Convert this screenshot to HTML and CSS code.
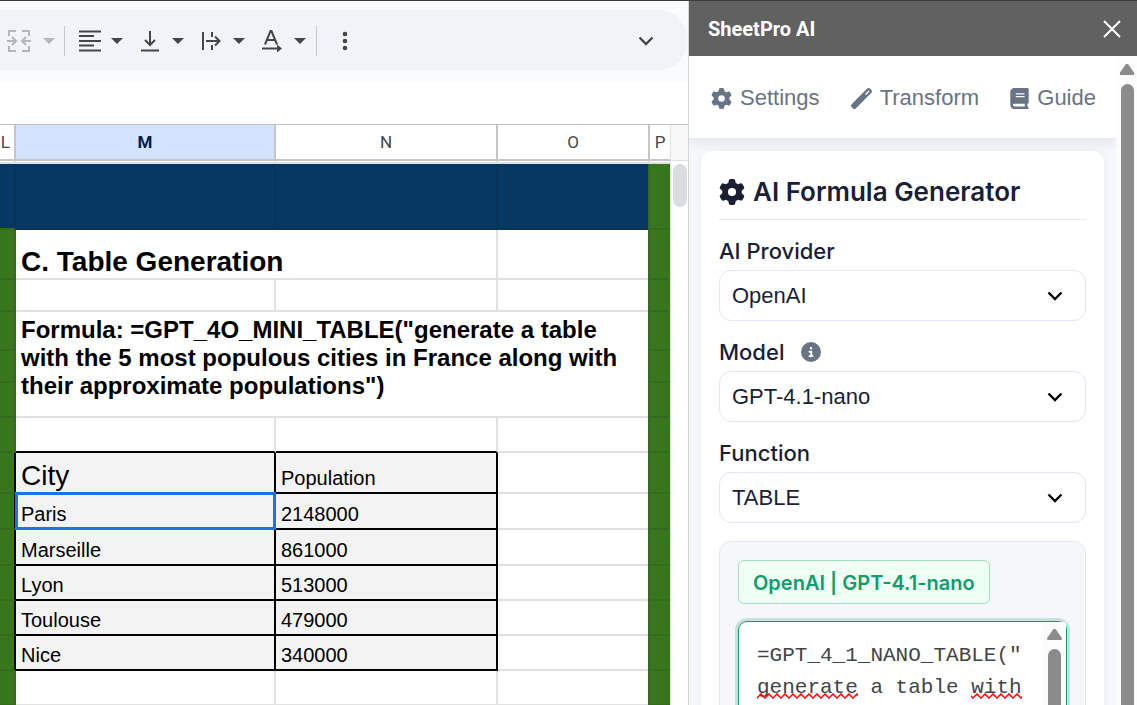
FILE: index.html
```html
<!DOCTYPE html>
<html lang="en">
<head>
    <meta charset="UTF-8">
    <meta name="viewport" content="width=device-width, initial-scale=1.0">
    <title>SheetPro AI</title>
    <link rel="stylesheet" href="styles.css">
</head>
<body>
    <main class="sheet">
        <div class="toolbar-wrap">
            <div class="toolbar">
                <button class="tool disabled" aria-label="Merge cells" disabled>
                    <svg class="tool-icon" viewBox="0 0 24 24" fill="none" stroke="currentColor" stroke-width="2">
                        <path d="M9 2H2v5M2 17v5h7M15 2h7v5M22 17v5h-7M0 12h9M5 8l4 4-4 4M24 12h-9M19 8l-4 4 4 4"/>
                    </svg>
                    <span class="caret"></span>
                </button>
                <span class="divider"></span>
                <button class="tool" aria-label="Horizontal align">
                    <svg class="tool-icon" viewBox="0 0 24 24" fill="none" stroke="currentColor" stroke-width="2">
                        <path d="M1 2.500h22M1 7h15M1 12h22M1 16.500h15M1 21.500h22"/>
                    </svg>
                    <span class="caret"></span>
                </button>
                <button class="tool" aria-label="Vertical align">
                    <svg class="tool-icon" viewBox="0 0 24 24" fill="none" stroke="currentColor" stroke-width="2">
                        <path d="M2 21.500h18M11 2v14M6 11l5 5 5-5"/>
                    </svg>
                    <span class="caret"></span>
                </button>
                <button class="tool" aria-label="Text wrapping">
                    <svg class="tool-icon" viewBox="0 0 24 24" fill="none" stroke="currentColor" stroke-width="2">
                        <path d="M3 3v18M12 3v5M12 16v5M6 12h13M15 7.500l4.500 4.500-4.500 4.500"/>
                    </svg>
                    <span class="caret"></span>
                </button>
                <button class="tool" aria-label="Text rotation">
                    <svg class="tool-icon" viewBox="0 0 24 24" fill="none" stroke="currentColor" stroke-width="2">
                        <path d="M4 15.500L9.500 2h1L16 15.500M6 11h8M1 19.500h17"/>
                        <path d="M16 15.500l5 4-5 4z" fill="currentColor" stroke="none"/>
                    </svg>
                    <span class="caret"></span>
                </button>
                <span class="divider"></span>
                <button class="more" aria-label="More">
                    <svg width="6" height="20" viewBox="0 0 6 20" fill="currentColor">
                        <circle cx="3" cy="3" r="2.300"/><circle cx="3" cy="10" r="2.300"/><circle cx="3" cy="17" r="2.300"/>
                    </svg>
                </button>
                <button class="collapse" aria-label="Hide the menus">
                    <svg width="16" height="10" viewBox="0 0 16 10" fill="none" stroke="currentColor" stroke-width="2.400">
                        <path d="M1.500 1.500L8 8l6.500-6.500"/>
                    </svg>
                </button>
            </div>
        </div>

        <div class="grid-wrap">
            <div class="grid-main">
                <table class="grid">
                    <colgroup>
                        <col class="col-l"><col class="col-m"><col class="col-n"><col class="col-o"><col class="col-p">
                    </colgroup>
                    <thead>
                        <tr>
                            <th>L</th>
                            <th class="active">M</th>
                            <th>N</th>
                            <th>O</th>
                            <th>P</th>
                        </tr>
                        <tr class="freeze"><td></td><td></td><td></td><td></td><td></td></tr>
                    </thead>
                    <tbody>
                        <tr class="h66"><td class="navy above-green"></td><td class="navy"></td><td class="navy"></td><td class="navy"></td><td class="green"></td></tr>
                        <tr class="h50"><td class="green"></td><td class="title" colspan="2">C. Table Generation</td><td></td><td class="green"></td></tr>
                        <tr class="h32"><td class="green"></td><td></td><td></td><td></td><td class="green"></td></tr>
                        <tr class="h39"><td class="green"></td><td class="formula" colspan="3" rowspan="3">Formula: =GPT_4O_MINI_TABLE("generate a table with the 5 most populous cities in France along with their approximate populations")</td><td class="green"></td></tr>
                        <tr class="h32"><td class="green"></td><td class="green"></td></tr>
                        <tr class="h35"><td class="green"></td><td class="green"></td></tr>
                        <tr class="h35"><td class="green"></td><td class="above-data"></td><td class="above-data"></td><td></td><td class="green"></td></tr>
                        <tr class="h41"><td class="green before-data"></td><td class="data big">City</td><td class="data">Population</td><td></td><td class="green"></td></tr>
                        <tr class="h36"><td class="green before-data"></td><td class="data selected">Paris</td><td class="data">2148000</td><td></td><td class="green"></td></tr>
                        <tr class="h36"><td class="green before-data"></td><td class="data">Marseille</td><td class="data">861000</td><td></td><td class="green"></td></tr>
                        <tr class="h35"><td class="green before-data"></td><td class="data">Lyon</td><td class="data">513000</td><td></td><td class="green"></td></tr>
                        <tr class="h35"><td class="green before-data"></td><td class="data">Toulouse</td><td class="data">479000</td><td></td><td class="green"></td></tr>
                        <tr class="h35"><td class="green before-data"></td><td class="data">Nice</td><td class="data">340000</td><td></td><td class="green"></td></tr>
                        <tr class="h35"><td class="green"></td><td></td><td></td><td></td><td class="green"></td></tr>
                    </tbody>
                </table>
            </div>
            <div class="grid-scroll"><div class="grid-thumb"></div></div>
        </div>
    </main>

    <aside class="sidebar">
        <header class="sidebar-header">
            <span>SheetPro AI</span>
            <button class="close" aria-label="Close">
                <svg width="18" height="18" viewBox="0 0 18 18" fill="none" stroke="currentColor" stroke-width="2">
                    <path d="M1 1l16 16M17 1L1 17"/>
                </svg>
            </button>
        </header>
        <div class="sidebar-body">
            <div class="panel">
                <nav class="tabs">
                    <a href="#settings">
                        <svg width="21" height="21" viewBox="0 0 512 512" fill="currentColor"><path d="M495.900 166.600c3.200 8.700 .5 18.400-6.400 24.600l-43.300 39.400c1.100 8.300 1.700 16.800 1.700 25.400s-.6 17.100-1.700 25.400l43.300 39.400c6.900 6.200 9.600 15.900 6.400 24.600c-4.400 11.900-9.700 23.300-15.800 34.300l-4.700 8.100c-6.600 11-14 21.400-22.100 31.200c-5.900 7.200-15.700 9.600-24.500 6.800l-55.700-17.700c-13.400 10.300-28.200 18.900-44 25.400l-12.500 57.100c-2 9.100-9 16.300-18.200 17.800c-13.800 2.300-28 3.500-42.500 3.500s-28.700-1.200-42.500-3.500c-9.200-1.500-16.200-8.700-18.200-17.800l-12.500-57.100c-15.800-6.500-30.600-15.100-44-25.400L83.100 425.900c-8.800 2.800-18.600 .3-24.500-6.800c-8.100-9.800-15.500-20.200-22.100-31.200l-4.700-8.100c-6.100-11-11.400-22.400-15.800-34.300c-3.200-8.700-.5-18.400 6.400-24.600l43.300-39.400C64.600 273.100 64 264.600 64 256s.6-17.100 1.700-25.400L22.400 191.200c-6.900-6.200-9.600-15.900-6.400-24.600c4.400-11.900 9.700-23.300 15.800-34.300l4.700-8.100c6.600-11 14-21.400 22.100-31.200c5.900-7.200 15.700-9.600 24.500-6.800l55.700 17.700c13.400-10.300 28.200-18.900 44-25.400l12.500-57.100c2-9.100 9-16.300 18.200-17.800C227.300 1.200 241.500 0 256 0s28.700 1.200 42.500 3.500c9.200 1.500 16.200 8.700 18.200 17.800l12.500 57.100c15.800 6.500 30.600 15.100 44 25.400l55.700-17.700c8.800-2.800 18.600-.3 24.500 6.800c8.100 9.800 15.500 20.200 22.100 31.200l4.700 8.100c6.100 11 11.400 22.400 15.800 34.300zM256 336a80 80 0 1 0 0-160 80 80 0 1 0 0 160z"/></svg>
                        Settings
                    </a>
                    <a href="#transform">
                        <svg width="21" height="21" viewBox="0 0 512 512" fill="currentColor"><path d="M14.100 463.300c-18.700-18.700-18.700-49.100 0-67.900L395.400 14.100c18.700-18.700 49.100-18.700 67.900 0l34.600 34.600c18.700 18.700 18.700 49.100 0 67.900L116.500 497.900c-18.700 18.700-49.100 18.700-67.900 0L14.100 463.300zM368 168l85-85L429.400 59.300l-85 85z"/></svg>
                        Transform
                    </a>
                    <a href="#guide">
                        <svg width="19" height="21" viewBox="0 0 448 512" fill="currentColor"><path d="M96 0C43 0 0 43 0 96V416c0 53 43 96 96 96H384h32c17.700 0 32-14.300 32-32s-14.300-32-32-32V384c17.700 0 32-14.300 32-32V32c0-17.700-14.300-32-32-32H384 96zm0 384H352v64H96c-17.700 0-32-14.300-32-32s14.300-32 32-32zm32-240c0-8.800 7.200-16 16-16H336c8.800 0 16 7.200 16 16s-7.200 16-16 16H144c-8.800 0-16-7.200-16-16zm16 48H336c8.800 0 16 7.200 16 16s-7.200 16-16 16H144c-8.800 0-16-7.200-16-16s7.200-16 16-16z"/></svg>
                        Guide
                    </a>
                </nav>
                <section class="card">
                    <h1>
                        <svg width="26" height="26" viewBox="0 0 512 512" fill="currentColor"><path d="M495.900 166.600c3.200 8.700 .5 18.400-6.400 24.600l-43.300 39.400c1.100 8.300 1.700 16.800 1.700 25.400s-.6 17.100-1.700 25.400l43.300 39.400c6.900 6.200 9.600 15.900 6.400 24.600c-4.400 11.900-9.700 23.300-15.800 34.300l-4.700 8.100c-6.600 11-14 21.400-22.100 31.200c-5.900 7.200-15.700 9.600-24.500 6.800l-55.700-17.700c-13.400 10.300-28.200 18.900-44 25.400l-12.500 57.100c-2 9.100-9 16.300-18.200 17.800c-13.800 2.300-28 3.500-42.500 3.500s-28.700-1.200-42.500-3.500c-9.200-1.500-16.200-8.700-18.200-17.800l-12.500-57.100c-15.800-6.500-30.600-15.100-44-25.400L83.100 425.900c-8.800 2.800-18.600 .3-24.500-6.800c-8.100-9.800-15.500-20.200-22.100-31.200l-4.700-8.100c-6.100-11-11.400-22.400-15.800-34.300c-3.200-8.700-.5-18.400 6.400-24.600l43.300-39.400C64.600 273.100 64 264.600 64 256s.6-17.100 1.700-25.400L22.400 191.200c-6.900-6.200-9.600-15.900-6.400-24.600c4.400-11.900 9.700-23.300 15.800-34.300l4.700-8.100c6.600-11 14-21.400 22.100-31.200c5.900-7.200 15.700-9.600 24.500-6.800l55.700 17.700c13.400-10.300 28.200-18.900 44-25.400l12.500-57.100c2-9.100 9-16.300 18.200-17.800C227.300 1.200 241.500 0 256 0s28.700 1.200 42.500 3.500c9.200 1.500 16.200 8.700 18.200 17.800l12.500 57.100c15.800 6.500 30.600 15.100 44 25.400l55.700-17.700c8.800-2.800 18.600-.3 24.500 6.800c8.100 9.800 15.500 20.200 22.100 31.200l4.700 8.100c6.100 11 11.400 22.400 15.800 34.300zM256 336a80 80 0 1 0 0-160 80 80 0 1 0 0 160z"/></svg>
                        AI Formula Generator
                    </h1>

                    <div class="field">
                        <label for="provider">AI Provider</label>
                        <div class="select-wrap">
                            <select id="provider"><option>OpenAI</option></select>
                            <svg class="chevron" width="16" height="10" viewBox="0 0 16 10"><path d="M1.500 1.500L8 8l6.500-6.500"/></svg>
                        </div>
                    </div>

                    <div class="field">
                        <div class="label-row">
                            <label for="model">Model</label>
                            <svg width="20" height="20" viewBox="0 0 512 512" fill="currentColor"><path d="M256 512A256 256 0 1 0 256 0a256 256 0 1 0 0 512zM216 336h24V272H216c-13.300 0-24-10.700-24-24s10.700-24 24-24h48c13.300 0 24 10.700 24 24v88h8c13.300 0 24 10.700 24 24s-10.700 24-24 24H216c-13.300 0-24-10.700-24-24s10.700-24 24-24zm40-208a32 32 0 1 1 0 64 32 32 0 1 1 0-64z"/></svg>
                        </div>
                        <div class="select-wrap">
                            <select id="model"><option>GPT-4.1-nano</option></select>
                            <svg class="chevron" width="16" height="10" viewBox="0 0 16 10"><path d="M1.500 1.500L8 8l6.500-6.500"/></svg>
                        </div>
                    </div>

                    <div class="field">
                        <label for="function">Function</label>
                        <div class="select-wrap">
                            <select id="function"><option>TABLE</option></select>
                            <svg class="chevron" width="16" height="10" viewBox="0 0 16 10"><path d="M1.500 1.500L8 8l6.500-6.500"/></svg>
                        </div>
                    </div>

                    <div class="output">
                        <span class="badge">OpenAI | GPT-4.1-nano</span>
                        <div class="editor">
                            <textarea aria-label="Formula" spellcheck="false">=GPT_4_1_NANO_TABLE("generate a table with</textarea>
                            <!-- spelling marks under the second line -->
                            <svg class="squiggles" width="265" height="7" viewBox="0 0 265 7">
                                <defs>
                                    <pattern id="wave" width="8" height="7" patternUnits="userSpaceOnUse">
                                        <path d="M-2 3L0 5l4-4 4 4 2-2" fill="none" stroke="#f00" stroke-width="1.500"/>
                                    </pattern>
                                </defs>
                                <rect width="101" height="7" fill="url(#wave)"/>
                                <rect x="214" width="51" height="7" fill="url(#wave)"/>
                            </svg>
                            <div class="scrollbar">
                                <span class="scroll-up"></span>
                                <span class="scroll-thumb"></span>
                            </div>
                        </div>
                    </div>
                </section>
            </div>
            <div class="scrollbar">
                <span class="scroll-up"></span>
                <span class="scroll-thumb"></span>
            </div>
        </div>
    </aside>
</body>
</html>
```

FILE: styles.css
```css
:root {
    --text: #1a1f36;
    --muted: #697386;
    --panel-bg: #f5f7fb;
    --green: #38761d;
    --green-line: #336a1c;
    --navy: #073763;
    --navy-line: #0b325a;
    --accent: #0f9d6e;
    --font-body: "Liberation Sans", Arial, sans-serif;
    --font-heading: Inter, sans-serif;
}

* {
    box-sizing: border-box;
}

body {
    margin: 0;
    height: 100vh;
    overflow: hidden;
    display: flex;
    border-top: 1px solid #3c3c40;
    font-family: var(--font-body);
    background: #fff;
}

button {
    border: none;
    background: none;
    padding: 0;
    color: inherit;
}

/* Toolbar */
.sheet {
    flex: 1;
    min-width: 0;
    overflow: hidden;
}

.toolbar-wrap {
    padding: 9px 0 12px;
    background: #f9fbfd;
    margin-bottom: 42px;
}

.toolbar {
    display: flex;
    align-items: center;
    height: 60px;
    padding: 2px 34px 0 7px;
    border-radius: 0 30px 30px 0;
    background: #f0f4f9;
    color: #444746;
}

.tool {
    display: flex;
    align-items: center;
    gap: 9px;
    height: 40px;
    margin-right: 16px;
}

.tool.disabled {
    color: #b4b7ba;
    gap: 12px;
    margin-right: 9px;
}

.tool-icon {
    width: 24px;
    height: 24px;
}

.caret {
    border: 6px solid transparent;
    border-top-color: currentColor;
    border-bottom: none;
}

.divider {
    width: 1px;
    height: 30px;
    margin-right: 13px;
    background: #c7c7c7;
}

.tool + .divider {
    margin-left: -6px;
}

.disabled + .divider {
    margin-left: 0;
}

.more {
    margin-left: 12px;
    height: 20px;
}

.collapse {
    margin-left: auto;
    height: 10px;
}

.more svg,
.collapse svg,
.close svg {
    display: block;
}

/* Spreadsheet */
.grid-wrap {
    display: flex;
}

.grid-main {
    flex: 1;
    min-width: 0;
}

.grid {
    width: 100%;
    table-layout: fixed;
    border-collapse: separate;
    border-spacing: 0;
    border-top: 1px solid #c0c0c0;
    font-size: 20px;
    line-height: 24px;
    color: #000;
}

.col-l { width: 16px; }
.col-m { width: 260px; }
.col-n { width: 222px; }
.col-p { width: 22px; }

.grid th {
    height: 36px;
    padding: 0;
    border-right: 2px solid #c7c7c7;
    border-bottom: 2px solid #c7c7c7;
    font-family: Roboto, sans-serif;
    font-size: 17px;
    font-weight: 400;
    color: #444746;
}

/* column L is scrolled half out of view */
.grid th:first-child {
    direction: rtl;
    text-align: right;
    padding-right: 6px;
}

.grid th.active {
    background: #d3e3fd;
    color: #041e49;
    font-weight: 700;
}

.grid td {
    padding: 0 4px 2px;
    border-right: 2px solid #e1e1e1;
    border-bottom: 2px solid #e1e1e1;
    vertical-align: bottom;
}

/* column P draws the line between itself and O */
.grid th:nth-child(4),
.grid td:nth-last-child(2):not(:first-child),
.grid th:last-child,
.grid td:last-child {
    border-right: none;
}

.grid th:last-child {
    border-left: 2px solid #c7c7c7;
}

.grid td:last-child {
    border-left: 2px solid #e1e1e1;
}

.grid .freeze td {
    height: 3px;
    padding: 0;
}

.h32 { height: 32px; }
.h35 { height: 35px; }
.h36 { height: 36px; }
.h39 { height: 39px; }
.h41 { height: 41px; }
.h50 { height: 50px; }
.h66 { height: 66px; }

.grid .navy {
    background: var(--navy);
    border-color: var(--navy-line);
}

.grid .green,
.grid .green:last-child {
    background: var(--green);
    border-color: var(--green-line);
}

.grid .above-green {
    border-bottom-color: var(--green-line);
}

.grid .title {
    padding-left: 5px;
    padding-bottom: 0;
    font-size: 28px;
    line-height: 32px;
    font-weight: 700;
}

.grid .formula {
    padding-top: 4px;
    padding-left: 5px;
    font-size: 24px;
    line-height: 28px;
    font-weight: 700;
    vertical-align: top;
}

.grid .data {
    padding-left: 5px;
    background: #f3f3f3;
    border-color: #000;
}

.grid .big {
    padding-bottom: 0;
    font-size: 28px;
    line-height: 32px;
}

.grid .above-data {
    border-bottom-color: #000;
}

.grid .before-data {
    border-right-color: #000;
}

.selected {
    position: relative;
}

.selected::after {
    content: "";
    position: absolute;
    top: -2px;
    right: -2px;
    bottom: -2px;
    left: -1px;
    border: 3px solid #1a73e8;
}

.grid-scroll {
    width: 18px;
    padding: 39px 1px 0 2px;
    border-left: 1px solid #e1e1e1;
    border-top: 1px solid #c0c0c0;
    background: linear-gradient(#f8f8f8 35px, #d9e2ec 35px, #d9e2ec 36px, #fff 36px);
}

.grid-thumb {
    height: 43px;
    border-radius: 7px;
    background: #dadce0;
}

/* Sidebar */
.sidebar {
    width: 449px;
    display: flex;
    flex-direction: column;
    border-left: 1px solid #d5d5d5;
}

.sidebar-header {
    display: flex;
    align-items: center;
    justify-content: space-between;
    height: 55px;
    flex-shrink: 0;
    padding: 1px 16px 0 19px;
    background: #616161;
    color: #fff;
    font-family: Roboto, sans-serif;
    font-size: 20px;
    font-weight: 700;
}

.sidebar-body {
    flex: 1;
    min-height: 0;
    display: flex;
}

.panel {
    flex: 1;
    min-width: 0;
    overflow: hidden;
    background: var(--panel-bg);
}

.tabs {
    display: flex;
    align-items: center;
    justify-content: space-between;
    height: 83px;
    padding: 2px 20px 0 22px;
    border-bottom: 1px solid #e6e8f2;
    background: #fff;
    box-shadow: 0 4px 12px rgba(26, 31, 54, 0.08);
}

.tabs a {
    display: flex;
    align-items: center;
    gap: 8px;
    color: var(--muted);
    font-size: 22px;
    text-decoration: none;
}

.card {
    margin: 12px;
    padding: 18px;
    border-radius: 12px;
    background: #fff;
    color: var(--text);
    box-shadow: 0 2px 8px rgba(26, 31, 54, 0.06);
}

h1 {
    display: flex;
    align-items: center;
    gap: 8px;
    height: 51px;
    margin: 0 0 18px;
    padding-bottom: 5px;
    border-bottom: 1px solid #e6e8f2;
    font-family: var(--font-heading);
    font-size: 26px;
    font-weight: 600;
}

.field {
    margin-bottom: 18px;
}

.field label {
    display: block;
    margin-bottom: 5px;
    font-family: var(--font-heading);
    font-size: 22px;
    line-height: 27px;
    font-weight: 500;
}

.label-row {
    display: flex;
    gap: 17px;
}

.label-row svg {
    margin-top: 3px;
    color: var(--muted);
}

.select-wrap {
    position: relative;
}

.select-wrap select {
    display: block;
    width: 100%;
    height: 51px;
    padding: 0 12px;
    border: 1px solid #e3e6f2;
    border-radius: 12px;
    background: #fff;
    color: var(--text);
    font-family: var(--font-body);
    font-size: 22px;
    appearance: none;
}

.chevron {
    position: absolute;
    top: 21px;
    right: 23px;
    fill: none;
    stroke: #000;
    stroke-width: 2.4;
    pointer-events: none;
}

.output {
    padding: 18px;
    border: 1px solid #e3e6f2;
    border-radius: 12px;
    background: var(--panel-bg);
}

.badge {
    display: block;
    width: fit-content;
    margin-bottom: 17px;
    padding: 9px 14px 7px;
    border: 1px solid #a3dcc4;
    border-radius: 6px;
    background: #f0fff4;
    color: var(--accent);
    font-family: var(--font-heading);
    font-size: 20px;
    line-height: 26px;
    font-weight: 600;
}

.editor {
    position: relative;
}

.editor textarea {
    display: block;
    width: 100%;
    height: 180px;
    padding: 18px 40px 18px 18px;
    border: 1px solid var(--accent);
    border-radius: 9px;
    outline: none;
    overflow: hidden;
    resize: none;
    background: #fff;
    box-shadow: 0 0 0 3px #c3e4dc;
    color: #444;
    font-family: "Liberation Mono", "Courier New", monospace;
    font-size: 21px;
    line-height: 32px;
}

.squiggles {
    position: absolute;
    top: 72px;
    left: 19px;
    pointer-events: none;
}

/* Scrollbars */
.scrollbar {
    display: flex;
    flex-direction: column;
    align-items: center;
    width: 21px;
    padding: 8px 0 0 1px;
    background: #fcfcfc;
}

.editor .scrollbar {
    position: absolute;
    top: 1px;
    right: 1px;
    bottom: 1px;
    width: 23px;
    padding: 7px 0 0;
}

.scroll-up {
    width: 15px;
    height: 11px;
    margin-bottom: 9px;
    background: #8b8b8b;
    clip-path: polygon(43% 0, 57% 0, 100% 85%, 96% 100%, 4% 100%, 0 85%);
}

.scroll-thumb {
    flex: 1;
    width: 13px;
    border-radius: 7px 7px 0 0;
    background: #8b8b8b;
}
```
